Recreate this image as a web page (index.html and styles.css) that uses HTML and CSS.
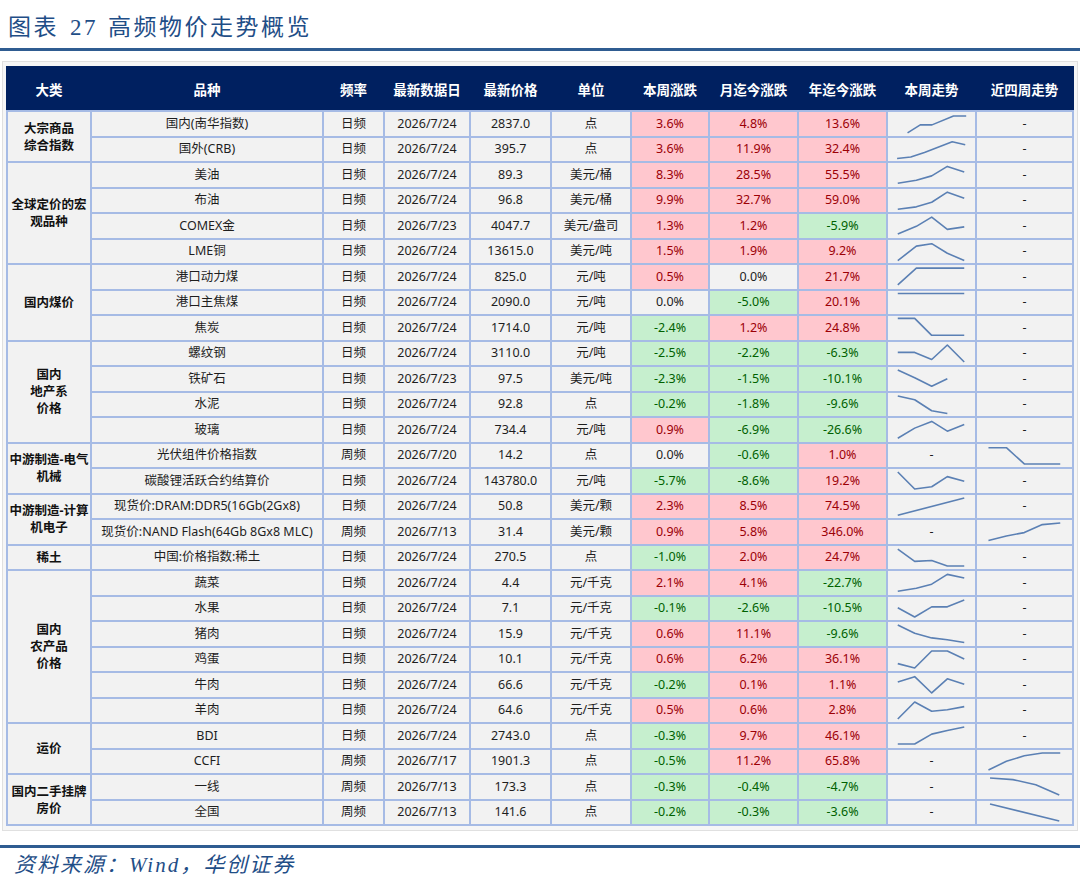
FILE: index.html
```html
<!DOCTYPE html>
<html lang="zh-CN">
<head>
<meta charset="utf-8">
<title>图表 27 高频物价走势概览</title>
<link rel="stylesheet" href="styles.css">
</head>
<body>
<div class="title">图表<span class="num">27</span>高频物价走势概览</div>
<div class="frame">
<table class="grid">
<colgroup>
<col class="c1"><col class="c2"><col class="c3"><col class="c4"><col class="c5"><col class="c6"><col class="c7"><col class="c8"><col class="c9"><col class="c10"><col class="c11">
</colgroup>
<thead>
<tr><th>大类</th><th>品种</th><th>频率</th><th>最新数据日</th><th>最新价格</th><th>单位</th><th>本周涨跌</th><th>月迄今涨跌</th><th>年迄今涨跌</th><th>本周走势</th><th>近四周走势</th></tr>
</thead>
<tbody>
<tr><td class="cat" rowspan="2">大宗商品<br>综合指数</td><td>国内(南华指数)</td><td>日频</td><td>2026/7/24</td><td>2837.0</td><td>点</td><td class="r">3.6%</td><td class="r">4.8%</td><td class="r">13.6%</td><td class="sp"><svg viewBox="0 0 89 25" preserveAspectRatio="none"><polyline points="20,22.7 33,14 45,14 67,4.3 80,4.3"/></svg></td><td>-</td></tr>
<tr><td>国外(CRB)</td><td>日频</td><td>2026/7/24</td><td>395.7</td><td>点</td><td class="r">3.6%</td><td class="r">11.9%</td><td class="r">32.4%</td><td class="sp"><svg viewBox="0 0 89 25" preserveAspectRatio="none"><polyline points="9.3,22.3 23.3,20.7 37.3,15.7 65.7,4 79,7.3"/></svg></td><td>-</td></tr>
<tr><td class="cat" rowspan="4">全球定价的宏<br>观品种</td><td>美油</td><td>日频</td><td>2026/7/24</td><td>89.3</td><td>美元/桶</td><td class="r">8.3%</td><td class="r">28.5%</td><td class="r">55.5%</td><td class="sp"><svg viewBox="0 0 89 25" preserveAspectRatio="none"><polyline points="10,22 29,18.7 44.7,14 60.7,3.7 78,9.7"/></svg></td><td>-</td></tr>
<tr><td>布油</td><td>日频</td><td>2026/7/24</td><td>96.8</td><td>美元/桶</td><td class="r">9.9%</td><td class="r">32.7%</td><td class="r">59.0%</td><td class="sp"><svg viewBox="0 0 89 25" preserveAspectRatio="none"><polyline points="10,22 29,19.4 44.7,14.4 60.7,3.4 78,10"/></svg></td><td>-</td></tr>
<tr><td>COMEX金</td><td>日频</td><td>2026/7/23</td><td>4047.7</td><td>美元/盎司</td><td class="r">1.3%</td><td class="r">1.2%</td><td class="g">-5.9%</td><td class="sp"><svg viewBox="0 0 89 25" preserveAspectRatio="none"><polyline points="10,21.7 29,13.4 44.7,3.4 60.7,16.7 78,14"/></svg></td><td>-</td></tr>
<tr><td>LME铜</td><td>日频</td><td>2026/7/24</td><td>13615.0</td><td>美元/吨</td><td class="r">1.5%</td><td class="r">1.9%</td><td class="r">9.2%</td><td class="sp"><svg viewBox="0 0 89 25" preserveAspectRatio="none"><polyline points="10,22.4 29,6.7 44.7,4 60.7,14.4 78,22.4"/></svg></td><td>-</td></tr>
<tr><td class="cat" rowspan="3">国内煤价</td><td>港口动力煤</td><td>日频</td><td>2026/7/24</td><td>825.0</td><td>元/吨</td><td class="r">0.5%</td><td class="n">0.0%</td><td class="r">21.7%</td><td class="sp"><svg viewBox="0 0 89 25" preserveAspectRatio="none"><polyline points="10,21.7 29,3.4 78,3.4"/></svg></td><td>-</td></tr>
<tr><td>港口主焦煤</td><td>日频</td><td>2026/7/24</td><td>2090.0</td><td>元/吨</td><td class="n">0.0%</td><td class="g">-5.0%</td><td class="r">20.1%</td><td class="sp"><svg viewBox="0 0 89 25" preserveAspectRatio="none"><polyline points="10,2.7 78,2.7"/></svg></td><td>-</td></tr>
<tr><td>焦炭</td><td>日频</td><td>2026/7/24</td><td>1714.0</td><td>元/吨</td><td class="g">-2.4%</td><td class="r">1.2%</td><td class="r">24.8%</td><td class="sp"><svg viewBox="0 0 89 25" preserveAspectRatio="none"><polyline points="10,2.6 27.3,2.6 44.7,21 78,21"/></svg></td><td>-</td></tr>
<tr><td class="cat" rowspan="4">国内<br>地产系<br>价格</td><td>螺纹钢</td><td>日频</td><td>2026/7/24</td><td>3110.0</td><td>元/吨</td><td class="g">-2.5%</td><td class="g">-2.2%</td><td class="g">-6.3%</td><td class="sp"><svg viewBox="0 0 89 25" preserveAspectRatio="none"><polyline points="10,11.3 27.3,11.3 44.7,19 60.7,3.3 78,21.7"/></svg></td><td>-</td></tr>
<tr><td>铁矿石</td><td>日频</td><td>2026/7/23</td><td>97.5</td><td>美元/吨</td><td class="g">-2.3%</td><td class="g">-1.5%</td><td class="g">-10.1%</td><td class="sp"><svg viewBox="0 0 89 25" preserveAspectRatio="none"><polyline points="10,3.3 27.3,11.7 44.7,21 60.7,12.7"/></svg></td><td>-</td></tr>
<tr><td>水泥</td><td>日频</td><td>2026/7/24</td><td>92.8</td><td>点</td><td class="g">-0.2%</td><td class="g">-1.8%</td><td class="g">-9.6%</td><td class="sp"><svg viewBox="0 0 89 25" preserveAspectRatio="none"><polyline points="10,3.3 27.3,7.3 44.7,19.3 60.7,22.3"/></svg></td><td>-</td></tr>
<tr><td>玻璃</td><td>日频</td><td>2026/7/24</td><td>734.4</td><td>元/吨</td><td class="r">0.9%</td><td class="g">-6.9%</td><td class="g">-26.6%</td><td class="sp"><svg viewBox="0 0 89 25" preserveAspectRatio="none"><polyline points="10,22 27.3,11 44.7,3.7 60.7,14.3 78,7"/></svg></td><td>-</td></tr>
<tr><td class="cat" rowspan="2">中游制造-电气<br>机械</td><td>光伏组件价格指数</td><td>周频</td><td>2026/7/20</td><td>14.2</td><td>点</td><td class="n">0.0%</td><td class="g">-0.6%</td><td class="r">1.0%</td><td>-</td><td class="sp"><svg viewBox="0 0 97 25" preserveAspectRatio="none"><polyline points="11.7,4 30,4 48.3,21.7 85,21.7"/></svg></td></tr>
<tr><td>碳酸锂活跃合约结算价</td><td>日频</td><td>2026/7/24</td><td>143780.0</td><td>元/吨</td><td class="g">-5.7%</td><td class="g">-8.6%</td><td class="r">19.2%</td><td class="sp"><svg viewBox="0 0 89 25" preserveAspectRatio="none"><polyline points="10,3.3 27.3,21.7 44.7,19.3 60.7,8.3 78,13.3"/></svg></td><td>-</td></tr>
<tr><td class="cat" rowspan="2">中游制造-计算<br>机电子</td><td>现货价:DRAM:DDR5(16Gb(2Gx8)</td><td>日频</td><td>2026/7/24</td><td>50.8</td><td>美元/颗</td><td class="r">2.3%</td><td class="r">8.5%</td><td class="r">74.5%</td><td class="sp"><svg viewBox="0 0 89 25" preserveAspectRatio="none"><polyline points="10,22 78,3.3"/></svg></td><td>-</td></tr>
<tr><td>现货价:NAND Flash(64Gb 8Gx8 MLC)</td><td>周频</td><td>2026/7/13</td><td>31.4</td><td>美元/颗</td><td class="r">0.9%</td><td class="r">5.8%</td><td class="r">346.0%</td><td>-</td><td class="sp"><svg viewBox="0 0 97 25" preserveAspectRatio="none"><polyline points="11.7,22.3 30,17.3 48.3,13.7 66.7,5 85,3.3"/></svg></td></tr>
<tr><td class="cat">稀土</td><td>中国:价格指数:稀土</td><td>日频</td><td>2026/7/24</td><td>270.5</td><td>点</td><td class="g">-1.0%</td><td class="r">2.0%</td><td class="r">24.7%</td><td class="sp"><svg viewBox="0 0 89 25" preserveAspectRatio="none"><polyline points="10,3.3 27.3,16.7 44.7,15.7 60.7,21.7 78,21.7"/></svg></td><td>-</td></tr>
<tr><td class="cat" rowspan="6">国内<br>农产品<br>价格</td><td>蔬菜</td><td>日频</td><td>2026/7/24</td><td>4.4</td><td>元/千克</td><td class="r">2.1%</td><td class="r">4.1%</td><td class="g">-22.7%</td><td class="sp"><svg viewBox="0 0 89 25" preserveAspectRatio="none"><polyline points="10,22 29,18.7 44.7,14.3 60.7,3.7 78,7.7"/></svg></td><td>-</td></tr>
<tr><td>水果</td><td>日频</td><td>2026/7/24</td><td>7.1</td><td>元/千克</td><td class="g">-0.1%</td><td class="g">-2.6%</td><td class="g">-10.5%</td><td class="sp"><svg viewBox="0 0 89 25" preserveAspectRatio="none"><polyline points="10,11.7 27.3,21.7 44.7,10.7 60.7,10.7 78,3.3"/></svg></td><td>-</td></tr>
<tr><td>猪肉</td><td>日频</td><td>2026/7/24</td><td>15.9</td><td>元/千克</td><td class="r">0.6%</td><td class="r">11.1%</td><td class="g">-9.6%</td><td class="sp"><svg viewBox="0 0 89 25" preserveAspectRatio="none"><polyline points="10,3.3 27.3,12.3 44.7,17.3 60.7,19.3 78,22.3"/></svg></td><td>-</td></tr>
<tr><td>鸡蛋</td><td>日频</td><td>2026/7/24</td><td>10.1</td><td>元/千克</td><td class="r">0.6%</td><td class="r">6.2%</td><td class="r">36.1%</td><td class="sp"><svg viewBox="0 0 89 25" preserveAspectRatio="none"><polyline points="10,17 27.3,21.7 44.7,3.3 60.7,3.3 78,12"/></svg></td><td>-</td></tr>
<tr><td>牛肉</td><td>日频</td><td>2026/7/24</td><td>66.6</td><td>元/千克</td><td class="g">-0.2%</td><td class="r">0.1%</td><td class="r">1.1%</td><td class="sp"><svg viewBox="0 0 89 25" preserveAspectRatio="none"><polyline points="10,9.7 27.3,4 44.7,21.7 60.7,6.3 78,12.3"/></svg></td><td>-</td></tr>
<tr><td>羊肉</td><td>日频</td><td>2026/7/24</td><td>64.6</td><td>元/千克</td><td class="r">0.5%</td><td class="r">0.6%</td><td class="r">2.8%</td><td class="sp"><svg viewBox="0 0 89 25" preserveAspectRatio="none"><polyline points="10,21.7 27.3,3.3 44.7,13.3 60.7,11.7 78,8.3"/></svg></td><td>-</td></tr>
<tr><td class="cat" rowspan="2">运价</td><td>BDI</td><td>日频</td><td>2026/7/24</td><td>2743.0</td><td>点</td><td class="g">-0.3%</td><td class="r">9.7%</td><td class="r">46.1%</td><td class="sp"><svg viewBox="0 0 89 25" preserveAspectRatio="none"><polyline points="10,21.7 27.3,21.7 44.7,11 60.7,7 78,3.3"/></svg></td><td>-</td></tr>
<tr><td>CCFI</td><td>周频</td><td>2026/7/17</td><td>1901.3</td><td>点</td><td class="g">-0.5%</td><td class="r">11.2%</td><td class="r">65.8%</td><td>-</td><td class="sp"><svg viewBox="0 0 97 25" preserveAspectRatio="none"><polyline points="11.7,21.7 30,12.3 48.3,6.3 66.7,3.3 85,3.3"/></svg></td></tr>
<tr><td class="cat" rowspan="2">国内二手挂牌<br>房价</td><td>一线</td><td>周频</td><td>2026/7/13</td><td>173.3</td><td>点</td><td class="g">-0.3%</td><td class="g">-0.4%</td><td class="g">-4.7%</td><td>-</td><td class="sp"><svg viewBox="0 0 97 25" preserveAspectRatio="none"><polyline points="13.3,3.3 36.7,5 60,10.7 84,21.7"/></svg></td></tr>
<tr><td>全国</td><td>周频</td><td>2026/7/13</td><td>141.6</td><td>点</td><td class="g">-0.2%</td><td class="g">-0.3%</td><td class="g">-3.6%</td><td>-</td><td class="sp"><svg viewBox="0 0 97 25" preserveAspectRatio="none"><polyline points="13.3,3.3 84,21.7"/></svg></td></tr>
</tbody>
</table>
</div>
<div class="src">资料来源：Wind，华创证券</div>
</body>
</html>
```
FILE: styles.css
```css
html, body {
  margin: 0;
  padding: 0;
  background: #ffffff;
}
body {
  font-family: "Noto Sans", "Noto Sans CJK SC", sans-serif;
  width: 1080px;
}
.title {
  height: 34px;
  padding: 14px 0 0 8px;
  font-family: "Liberation Serif", "Noto Sans CJK SC", serif;
  font-size: 23px;
  line-height: 28px;
  letter-spacing: 2.5px;
  color: #1f4e87;
  border-bottom: 3px solid #2f5c91;
  white-space: nowrap;
}
.title .num {
  margin: 0 10px 0 11px;
}
.frame {
  margin: 10px 2px 0 2px;
  border: 1px solid #e0e0e0;
  padding: 4px 3px 4px 3px;
  background: #f6f6f6;
}
.grid {
  border-collapse: collapse;
  table-layout: fixed;
  width: 1066px;
}
.c1 { width: 84px; }
.c2 { width: 232px; }
.c3 { width: 61px; }
.c4 { width: 86px; }
.c5 { width: 81px; }
.c6 { width: 80px; }
.c7 { width: 78px; }
.c8 { width: 89px; }
.c9 { width: 89px; }
.c10 { width: 89px; }
.c11 { width: 97px; }
.grid thead tr {
  height: 44px;
}
.grid th {
  background: #002060;
  color: #ffffff;
  font-family: "Noto Sans CJK SC", sans-serif;
  font-weight: bold;
  font-size: 13.5px;
  line-height: 16px;
  border: 2px solid #002060;
  border-bottom-color: #a6bbe5;
  padding: 0;
  text-align: center;
}
.grid tbody tr {
  height: 25.5px;
}
.grid td {
  border: 2px solid #a6bbe5;
  background: #f2f2f2;
  color: #1e1e1e;
  font-size: 12.5px;
  line-height: 16px;
  text-align: center;
  padding: 0 1px;
  white-space: nowrap;
  overflow: hidden;
}
.grid td.cat {
  font-weight: bold;
  line-height: 17px;
  font-size: 12.5px;
  color: #111111;
}
.grid td.r {
  background: #ffc7ce;
  color: #9c0006;
}
.grid td.g {
  background: #c6efce;
  color: #006100;
}
.grid td.n {
  background: #f2f2f2;
}
.grid td.sp {
  padding: 0;
}
.sp svg {
  display: block;
  width: 100%;
  height: 23px;
}
.sp polyline {
  fill: none;
  stroke: #5b80b4;
  stroke-width: 1.6;
  stroke-linejoin: round;
  vector-effect: non-scaling-stroke;
}
.src {
  margin-top: 14px;
  border-top: 3px solid #2f5c91;
  padding: 3px 0 0 14px;
  font-family: "Liberation Serif", "Noto Sans CJK SC", serif;
  font-style: italic;
  font-size: 21px;
  line-height: 28px;
  letter-spacing: 2px;
  color: #1f4e87;
}
```
